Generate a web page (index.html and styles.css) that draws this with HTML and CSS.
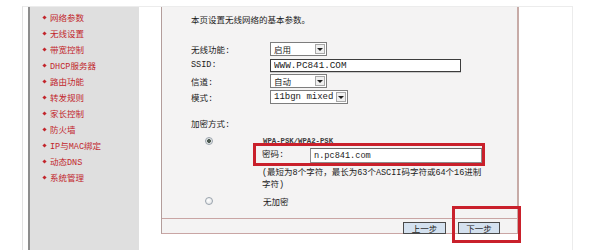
FILE: index.html
```html
<!DOCTYPE html>
<html lang="zh-CN">
<head>
<meta charset="utf-8">
<title>无线网络基本设置</title>
<link rel="stylesheet" href="styles.css">
</head>
<body>
<div class="frame">
  <nav class="sidebar">
    <ul class="menu">
      <li><span class="dot"></span>网络参数</li>
      <li><span class="dot"></span>无线设置</li>
      <li><span class="dot"></span>带宽控制</li>
      <li><span class="dot"></span>DHCP服务器</li>
      <li><span class="dot"></span>路由功能</li>
      <li><span class="dot"></span>转发规则</li>
      <li><span class="dot"></span>家长控制</li>
      <li><span class="dot"></span>防火墙</li>
      <li><span class="dot"></span>IP与MAC绑定</li>
      <li><span class="dot"></span>动态DNS</li>
      <li><span class="dot"></span>系统管理</li>
    </ul>
  </nav>
  <main class="panel">
    <div class="panel-body">
      <p class="intro">本页设置无线网络的基本参数。</p>
      <div class="form-grid">
        <span class="lbl">无线功能:</span>
        <span class="sel sel-short"><span class="sel-val">启用</span><span class="sel-btn"></span></span>
        <span class="lbl">SSID:</span>
        <span class="field"><input class="txt ssid" type="text" value="WWW.PC841.COM"></span>
        <span class="lbl">信道:</span>
        <span class="sel sel-short"><span class="sel-val">自动</span><span class="sel-btn"></span></span>
        <span class="lbl">模式:</span>
        <span class="sel sel-long"><span class="sel-val mono">11bgn mixed</span><span class="sel-btn"></span></span>
      </div>
      <div class="enc-title">加密方式:</div>
      <div class="enc-row">
        <span class="radio-cell"><span class="radio checked"></span></span>
        <span class="enc-name">WPA-PSK/WPA2-PSK</span>
      </div>
      <div class="pwd-row">
        <span class="pwd-lbl">密码:</span>
        <input class="txt pwd" type="text" value="n.pc841.com">
      </div>
      <p class="hint">(最短为8个字符，最长为63个ASCII码字符或64个16进制<br>字符)</p>
      <div class="enc-row enc-none">
        <span class="radio-cell"><span class="radio"></span></span>
        <span class="enc-text">无加密</span>
      </div>
    </div>
    <div class="btnbar">
      <button class="btn btn-prev" type="button">上一步</button>
      <button class="btn btn-next" type="button">下一步</button>
    </div>
    <div class="mark mark-pwd"></div>
    <div class="mark mark-next"></div>
  </main>
</div>
</body>
</html>
```

FILE: styles.css
```css
html, body {
  margin: 0;
  padding: 0;
  background: #ffffff;
  overflow: hidden;
}

body {
  font-family: "Liberation Mono", "Noto Sans CJK SC", monospace;
  font-size: 8.5px;
  color: #1c1c1c;
}

.frame {
  display: flex;
  align-items: flex-start;
  margin: 6px 0 0 22px;
  width: 549px;
  height: 243px;
  border-top: 1px solid #ececec;
  border-left: 1px solid #e2e2e2;
  border-right: 1px solid #ececec;
}

/* ---------- sidebar ---------- */
.sidebar {
  align-self: stretch;
  margin-left: 5px;
  width: 109px;
  background: #dfdfdf;
  border-left: 2px solid #8d8d8d;
}

.menu {
  list-style: none;
  margin: 0;
  padding: 2px 0 0 12px;
}

.menu li {
  display: flex;
  align-items: center;
  height: 16px;
  color: #c2262c;
  white-space: nowrap;
}

.dot {
  width: 3px;
  height: 3px;
  margin: 0 4px 0 1px;
  background: #c2262c;
  transform: rotate(45deg);
}

/* ---------- main panel ---------- */
.panel {
  position: relative;
  margin-left: 22px;
  width: 355px;
  background: #f4f3f3;
  border-left: 1px solid #b39d9b;
  border-right: 2px solid #c7aba7;
  border-bottom: 1px solid #c9a5a4;
}

.panel-body {
  height: 211px;
  padding-top: 6px;
  box-sizing: border-box;
}

.intro {
  margin: 0;
  padding-left: 29px;
  line-height: 16px;
}

.form-grid {
  display: grid;
  grid-template-columns: 79px auto;
  grid-auto-rows: 16px;
  align-items: center;
  margin-top: 12px;
  padding-left: 29px;
}

.lbl {
  white-space: nowrap;
}

.sel {
  display: flex;
  align-items: center;
  justify-content: space-between;
  box-sizing: border-box;
  height: 14px;
  padding: 0 1px 0 3px;
  background: #ffffff;
  border: 1px solid #7d7d7d;
}

.sel-short { width: 57px; }
.sel-long  { width: 78px; }

.sel-val {
  white-space: nowrap;
}

.mono {
  font-size: 9px;
}

.sel-btn {
  display: flex;
  align-items: center;
  justify-content: center;
  box-sizing: border-box;
  width: 10px;
  height: 10px;
  background: #f0f0f0;
  border: 1px solid #a8a8a8;
}

.sel-btn::after {
  content: "";
  width: 0;
  height: 0;
  border-left: 3px solid transparent;
  border-right: 3px solid transparent;
  border-top: 3px solid #202020;
}

.field {
  display: flex;
}

.txt {
  box-sizing: border-box;
  margin: 0;
  padding: 0 3px;
  background: #ffffff;
  font-family: "Liberation Mono", monospace;
  color: #1c1c1c;
  outline: none;
}

.ssid {
  width: 191px;
  height: 13px;
  font-size: 9.3px;
  border: 1px solid #3c3c3c;
  box-shadow: 0 1px 0 #c9c9c9;
}

.enc-title {
  margin-top: 12px;
  padding-left: 29px;
  line-height: 16px;
}

.enc-row {
  display: flex;
  align-items: center;
  height: 15px;
}

.enc-none {
  height: 16px;
  margin-top: 2px;
}

.radio-cell {
  display: flex;
  width: 101px;
}

.radio {
  box-sizing: border-box;
  width: 8px;
  height: 8px;
  margin-left: 43px;
  border-radius: 50%;
  border: 1px solid #9aa3ad;
  background: radial-gradient(circle at 40% 40%, #ffffff 0%, #e6e8ea 70%);
}

.radio.checked {
  background: radial-gradient(circle, #4d5a52 0 1.6px, #dfe3e2 2.2px, #f4f5f5 100%);
}

.enc-name {
  font-size: 7.3px;
  font-weight: bold;
  color: #3a3a3a;
  letter-spacing: 0;
}

.pwd-row {
  display: flex;
  align-items: flex-start;
  height: 16px;
  padding-left: 100px;
}

.pwd-lbl {
  width: 48px;
  line-height: 15px;
}

.pwd {
  width: 172px;
  height: 15px;
  font-size: 8.6px;
  border: 1px solid #8c8c8c;
  border-top-color: #6a6a6a;
}

.hint {
  margin: 3px 0 0;
  padding-left: 100px;
  line-height: 12px;
  white-space: nowrap;
}

/* ---------- button bar ---------- */
.btnbar {
  display: flex;
  justify-content: flex-end;
  gap: 12px;
  height: 15px;
  box-sizing: border-box;
  padding: 3px 17px 0 0;
  border-top: 1px solid #c9a5a4;
}

.btn {
  box-sizing: border-box;
  height: 12px;
  margin: 0;
  padding: 0;
  font-family: "Noto Sans CJK SC", sans-serif;
  font-size: 8.5px;
  line-height: 10px;
  color: #1c1c1c;
  background: #d4e1ef;
  border: 1px solid #4a4a4a;
  border-radius: 0;
}

.btn-prev { width: 43px; }
.btn-next { width: 42px; }

/* ---------- red highlight marks (overlay) ---------- */
.mark {
  position: absolute;
  box-sizing: border-box;
  border: 3px solid #c9202b;
  pointer-events: none;
}

.mark-pwd {
  left: 91px;
  top: 136px;
  width: 232px;
  height: 23px;
}

.mark-next {
  left: 290px;
  top: 199px;
  width: 69px;
  height: 37px;
}
```
